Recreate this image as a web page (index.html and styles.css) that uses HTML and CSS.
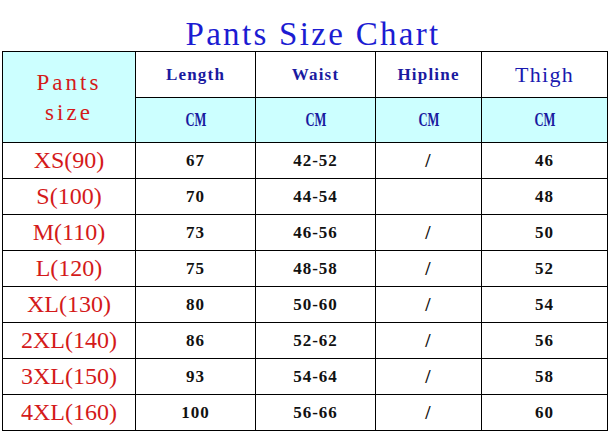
FILE: index.html
```html
<!DOCTYPE html>
<html>
<head>
<meta charset="utf-8">
<link rel="stylesheet" href="styles.css">
</head>
<body>
<h1 class="title">Pants Size Chart</h1>
<table class="chart">
  <colgroup>
    <col class="c-size">
    <col class="c-len">
    <col class="c-waist">
    <col class="c-hip">
    <col class="c-thigh">
  </colgroup>
  <tr class="head-row">
    <td class="size-head" rowspan="2"><span>Pants</span><span>size</span></td>
    <td class="label">Length</td>
    <td class="label">Waist</td>
    <td class="label">Hipline</td>
    <td class="label label-big">Thigh</td>
  </tr>
  <tr class="unit-row">
    <td class="unit"><span>CM</span></td>
    <td class="unit"><span>CM</span></td>
    <td class="unit"><span>CM</span></td>
    <td class="unit"><span>CM</span></td>
  </tr>
  <tr class="data-row"><td class="size">XS(90)</td><td class="val">67</td><td class="val">42-52</td><td class="val slash">/</td><td class="val">46</td></tr>
  <tr class="data-row"><td class="size">S(100)</td><td class="val">70</td><td class="val">44-54</td><td class="val slash"></td><td class="val">48</td></tr>
  <tr class="data-row"><td class="size">M(110)</td><td class="val">73</td><td class="val">46-56</td><td class="val slash">/</td><td class="val">50</td></tr>
  <tr class="data-row"><td class="size">L(120)</td><td class="val">75</td><td class="val">48-58</td><td class="val slash">/</td><td class="val">52</td></tr>
  <tr class="data-row"><td class="size">XL(130)</td><td class="val">80</td><td class="val">50-60</td><td class="val slash">/</td><td class="val">54</td></tr>
  <tr class="data-row"><td class="size">2XL(140)</td><td class="val">86</td><td class="val">52-62</td><td class="val slash">/</td><td class="val">56</td></tr>
  <tr class="data-row"><td class="size">3XL(150)</td><td class="val">93</td><td class="val">54-64</td><td class="val slash">/</td><td class="val">58</td></tr>
  <tr class="data-row"><td class="size">4XL(160)</td><td class="val">100</td><td class="val">56-66</td><td class="val slash">/</td><td class="val">60</td></tr>
</table>
</body>
</html>
```
FILE: styles.css
```css
html, body {
  margin: 0;
  padding: 0;
  background: #ffffff;
}
body {
  width: 610px;
  height: 432px;
  overflow: hidden;
  font-family: "Liberation Serif", serif;
}
.title {
  margin: 0;
  height: 51px;
  box-sizing: border-box;
  padding: 17px 0 0 16px;
  text-align: center;
  font-family: "Liberation Serif", serif;
  font-weight: normal;
  font-size: 33px;
  line-height: 34px;
  letter-spacing: 2.3px;
  color: #1c1cd2;
}
.chart {
  margin-left: 2px;
  border-collapse: collapse;
  table-layout: fixed;
  width: 605px;
}
.c-size { width: 133px; }
.c-len { width: 120px; }
.c-waist { width: 120px; }
.c-hip { width: 106px; }
.c-thigh { width: 126px; }
.chart td {
  border: 1px solid #000;
  padding: 0;
  text-align: center;
  vertical-align: middle;
}
.head-row td { height: 45px; background: #fff; }
.unit-row td { height: 44px; background: #ccffff; }
.data-row td { height: 35px; }
.head-row .size-head {
  background: #ccffff;
  color: #d41a1a;
  font-size: 23px;
  letter-spacing: 3px;
  line-height: 30px;
  padding-top: 2px;
}
.size-head span { display: block; }
.label {
  color: #1a1aa0;
  font-weight: bold;
  font-size: 17px;
  letter-spacing: 1.2px;
}
.label-big {
  font-weight: normal;
  font-size: 22px;
  letter-spacing: 1.3px;
  color: #1a1ab0;
}
.unit {
  color: #1a1aa0;
  font-weight: bold;
  font-size: 18px;
}
.unit span {
  display: inline-block;
  transform: scaleX(0.7);
}
.size {
  color: #d41a1a;
  font-size: 24px;
}
.val {
  color: #111;
  font-weight: bold;
  font-size: 17px;
  letter-spacing: 1px;
}
.slash {
  font-size: 19px;
}
```
